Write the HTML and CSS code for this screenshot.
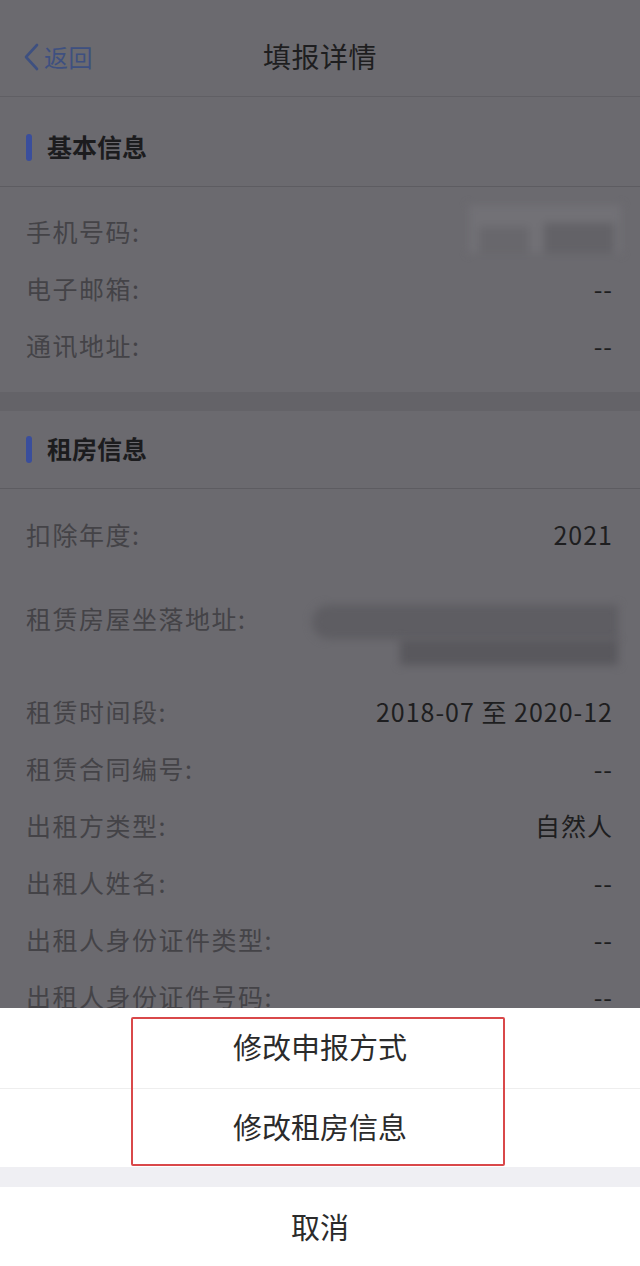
FILE: index.html
```html
<!DOCTYPE html>
<html lang="zh-CN">
<head>
<meta charset="utf-8">
<title>填报详情</title>
<link rel="stylesheet" href="styles.css">
</head>
<body>
<div class="page">
  <header class="navbar">
    <a class="back">
      <svg class="chev" width="18" height="30" viewBox="0 0 18 30"><path d="M15 3 L4 15 L15 27" fill="none" stroke="currentColor" stroke-width="2.6" stroke-linecap="round" stroke-linejoin="round"/></svg>
      <span>返回</span>
    </a>
    <h1 class="title">填报详情</h1>
  </header>

  <section class="section first">
    <div class="sec-head"><span class="bar"></span>基本信息</div>
    <div class="rows">
      <div class="row"><span class="label">手机号码:</span><span class="value"><span class="redact phone"><i class="p1"></i><i class="p2"></i></span></span></div>
      <div class="row"><span class="label">电子邮箱:</span><span class="value">--</span></div>
      <div class="row"><span class="label">通讯地址:</span><span class="value">--</span></div>
    </div>
  </section>

  <div class="band"></div>

  <section class="section">
    <div class="sec-head"><span class="bar"></span>租房信息</div>
    <div class="rows">
      <div class="row"><span class="label">扣除年度:</span><span class="value">2021</span></div>
      <div class="row tall"><span class="label">租赁房屋坐落地址:</span>
        <span class="value addr">
          <span class="redact a1"></span>
          <span class="redact a2"></span>
        </span>
      </div>
      <div class="row"><span class="label">租赁时间段:</span><span class="value">2018-07 至 2020-12</span></div>
      <div class="row"><span class="label">租赁合同编号:</span><span class="value">--</span></div>
      <div class="row"><span class="label">出租方类型:</span><span class="value">自然人</span></div>
      <div class="row"><span class="label">出租人姓名:</span><span class="value">--</span></div>
      <div class="row"><span class="label">出租人身份证件类型:</span><span class="value">--</span></div>
      <div class="row"><span class="label">出租人身份证件号码:</span><span class="value">--</span></div>
    </div>
  </section>
</div>

<div class="sheet">
  <div class="options">
    <div class="item">修改申报方式</div>
    <div class="item">修改租房信息</div>
  </div>
  <div class="sheet-gap"></div>
  <div class="item cancel">取消</div>
  <div class="highlight"></div>
</div>
</body>
</html>
```

FILE: styles.css
```css
html, body {
  margin: 0;
  padding: 0;
}
body {
  width: 640px;
  height: 1266px;
  overflow: hidden;
  background: #6b6a6f;
  font-family: "Noto Sans CJK SC", "Noto Sans", sans-serif;
  color: #1e1e20;
}
.page {
  background: #6b6a6f;
}
.navbar {
  height: 96px;
  border-bottom: 1px solid #605f64;
  display: flex;
  align-items: center;
  justify-content: center;
  position: relative;
}
.back {
  position: absolute;
  left: 22px;
  top: 41px;
  display: flex;
  align-items: center;
  gap: 4px;
  color: #3e5080;
  font-size: 24px;
  line-height: 32px;
}
.back span {
  letter-spacing: 0.5px;
}
.chev {
  display: block;
}
.title {
  margin: 0;
  font-size: 28px;
  font-weight: 400;
  color: #1e1e20;
  line-height: 40px;
  margin-top: 16px;
  letter-spacing: 0.5px;
}
.section.first {
  padding-top: 12px;
}
.sec-head {
  height: 78px;
  padding-bottom: 4px;
  box-sizing: border-box;
  border-bottom: 1px solid #5d5c61;
  display: flex;
  align-items: center;
  gap: 15px;
  padding-left: 26px;
  font-size: 25px;
  font-weight: 700;
  color: #1c1c1e;
}
.bar {
  width: 6px;
  height: 27px;
  border-radius: 3px;
  background: #3a4e9c;
  margin-top: 4px;
}
.rows {
  padding: 18px 28px 16px 26px;
}
.section:not(.first) .rows {
  padding-top: 19px;
}
.row {
  height: 57px;
  box-sizing: border-box;
  padding-bottom: 6px;
  display: flex;
  align-items: center;
  justify-content: space-between;
  font-size: 25px;
}
.row.tall {
  height: 120px;
}
.row.tall .label {
  margin-top: -8px;
}
.label {
  color: #444347;
  letter-spacing: 1.5px;
}
.value {
  color: #1e1e20;
  letter-spacing: 1px;
  margin-right: -1px;
}
.band {
  height: 19px;
  background: #646368;
}
.redact {
  display: block;
  filter: blur(4px);
}
.phone {
  width: 152px;
  height: 48px;
  background: #727176;
  position: relative;
  margin-right: -8px;
  margin-top: -4px;
}
.phone i {
  position: absolute;
  background: #68676c;
}
.phone .p1 { left: 10px; top: 22px; width: 50px; height: 26px; }
.phone .p2 { left: 75px; top: 18px; width: 70px; height: 30px; background: #636267; }
.addr {
  display: flex;
  flex-direction: column;
  align-items: flex-end;
  margin-right: -6px;
  margin-top: 26px;
}
.a1 {
  width: 306px;
  height: 34px;
  background: #5e5d62;
  border-radius: 17px 0 0 17px;
}
.a2 {
  width: 218px;
  height: 26px;
  background: #59585d;
}
.sheet {
  position: fixed;
  left: 0;
  right: 0;
  bottom: 0;
  height: 258px;
  background: #ffffff;
  display: flex;
  flex-direction: column;
}
.options .item + .item {
  border-top: 1px solid #eeeeee;
  height: 79px;
}
.item {
  height: 80px;
  box-sizing: border-box;
  padding-bottom: 4px;
  display: flex;
  align-items: center;
  justify-content: center;
  font-size: 29px;
  color: #2b2b2b;
}
.sheet-gap {
  height: 20px;
  background: #efeff3;
}
.item.cancel {
  height: 78px;
  padding-bottom: 0;
}
.highlight {
  position: absolute;
  left: 131px;
  top: 9px;
  width: 370px;
  height: 145px;
  border: 2px solid #d9484a;
  border-radius: 2px;
}
```
